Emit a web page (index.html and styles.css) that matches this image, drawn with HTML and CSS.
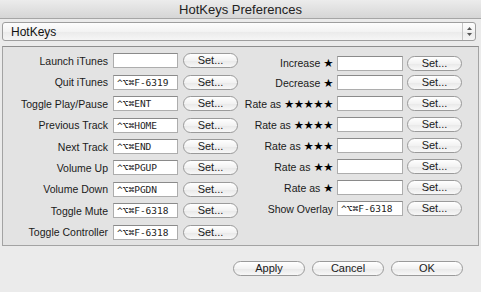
FILE: index.html
```html
<!DOCTYPE html>
<html lang="en">
<head>
    <meta charset="UTF-8">
    <title>HotKeys Preferences</title>
    <link rel="stylesheet" href="styles.css">
</head>
<body>
    <!-- Window title -->
    <div class="titlebar">HotKeys Preferences</div>

    <!-- Section popup -->
    <div class="popup">
        <span class="popup-label">HotKeys</span>
        <span class="popup-arrows">
            <svg width="7" height="11" viewBox="0 0 7 11">
                <path d="M3.5 1 L6 4 L1 4 Z" fill="#555"/>
                <path d="M3.5 10 L6 7 L1 7 Z" fill="#555"/>
            </svg>
        </span>
    </div>

    <!-- Hotkey list -->
    <div class="group">
        <div class="col col-left">
            <label>Launch iTunes</label><div class="field"></div><button>Set...</button>
            <label>Quit iTunes</label><div class="field">^⌥⌘F-6319</div><button>Set...</button>
            <label>Toggle Play/Pause</label><div class="field">^⌥⌘ENT</div><button>Set...</button>
            <label>Previous Track</label><div class="field">^⌥⌘HOME</div><button>Set...</button>
            <label>Next Track</label><div class="field">^⌥⌘END</div><button>Set...</button>
            <label>Volume Up</label><div class="field">^⌥⌘PGUP</div><button>Set...</button>
            <label>Volume Down</label><div class="field">^⌥⌘PGDN</div><button>Set...</button>
            <label>Toggle Mute</label><div class="field">^⌥⌘F-6318</div><button>Set...</button>
            <label>Toggle Controller</label><div class="field">^⌥⌘F-6318</div><button>Set...</button>
        </div>
        <div class="col col-right">
            <label>Increase <span class="stars">★</span></label><div class="field"></div><button>Set...</button>
            <label>Decrease <span class="stars">★</span></label><div class="field"></div><button>Set...</button>
            <label>Rate as <span class="stars">★★★★★</span></label><div class="field"></div><button>Set...</button>
            <label>Rate as <span class="stars">★★★★</span></label><div class="field"></div><button>Set...</button>
            <label>Rate as <span class="stars">★★★</span></label><div class="field"></div><button>Set...</button>
            <label>Rate as <span class="stars">★★</span></label><div class="field"></div><button>Set...</button>
            <label>Rate as <span class="stars">★</span></label><div class="field"></div><button>Set...</button>
            <label>Show Overlay</label><div class="field">^⌥⌘F-6318</div><button>Set...</button>
        </div>
    </div>

    <!-- Dialog buttons -->
    <div class="actions">
        <button>Apply</button>
        <button>Cancel</button>
        <button>OK</button>
    </div>
</body>
</html>
```

FILE: styles.css
```css
/* Basic Reset */
* {
    margin: 0;
    padding: 0;
    box-sizing: border-box;
}

body {
    font-family: 'Liberation Sans', Arial, sans-serif;
    font-size: 11px;
    color: #1a1a1a;
    background-color: #ebebeb;
    width: 481px;
    height: 292px;
    overflow: hidden;
}

.titlebar {
    height: 19px;
    line-height: 19px;
    text-align: center;
    font-size: 13px;
    color: #222;
    background: linear-gradient(#ececec, #d6d6d6);
    border-bottom: 1px solid #a6a6a6;
}

.popup {
    display: flex;
    align-items: center;
    height: 19px;
    margin: 3px 5px 0 2px;
    border: 1px solid #9e9e9e;
    border-radius: 3px;
    background: linear-gradient(#fdfdfd, #f3f3f3 50%, #eaeaea 51%, #f6f6f6);
}

.popup-label {
    flex: 1;
    padding-left: 8px;
    font-size: 12px;
    color: #111;
}

.popup-arrows {
    display: flex;
    align-items: center;
    justify-content: center;
    width: 13px;
    height: 100%;
    border-left: 1px solid #c4c4c4;
}

.group {
    display: flex;
    height: 200px;
    margin: 5px 2px 0 2px;
    border: 1px solid #a3a3a3;
    border-top-color: #8e8e8e;
    background-color: #e3e3e3;
}

.col {
    display: grid;
    align-items: center;
}

.col-left {
    grid-template-columns: 105px 65px 55px;
    grid-auto-rows: 21.4px;
    column-gap: 5px;
    padding-top: 3.3px;
}

.col-right {
    grid-template-columns: 95px 66px 55px;
    grid-template-rows: 18px repeat(7, 21px);
    column-gap: 4px;
    padding-top: 7px;
}

label {
    text-align: right;
    white-space: nowrap;
    font-size: 10.5px;
}

.stars {
    font-family: 'DejaVu Sans', sans-serif;
    font-size: 11.5px;
    letter-spacing: -0.5px;
    color: #000;
}

.field {
    height: 15px;
    line-height: 13px;
    padding-left: 3px;
    background-color: #fff;
    border: 1px solid #adadad;
    border-top-color: #8a8a8a;
    font-family: 'DejaVu Sans Mono', monospace;
    font-size: 9.5px;
    color: #222;
    white-space: nowrap;
    overflow: hidden;
}

button {
    height: 15px;
    border: 1px solid #9a9a9a;
    border-radius: 8px;
    background: linear-gradient(#ffffff, #f2f2f2 50%, #e8e8e8 51%, #f8f8f8);
    font-family: 'Liberation Sans', Arial, sans-serif;
    font-size: 11px;
    color: #1a1a1a;
    line-height: 13px;
}

.actions {
    display: flex;
    justify-content: flex-end;
    gap: 7px;
    padding: 15px 18px 0 0;
}

.actions button {
    width: 72px;
}
```
